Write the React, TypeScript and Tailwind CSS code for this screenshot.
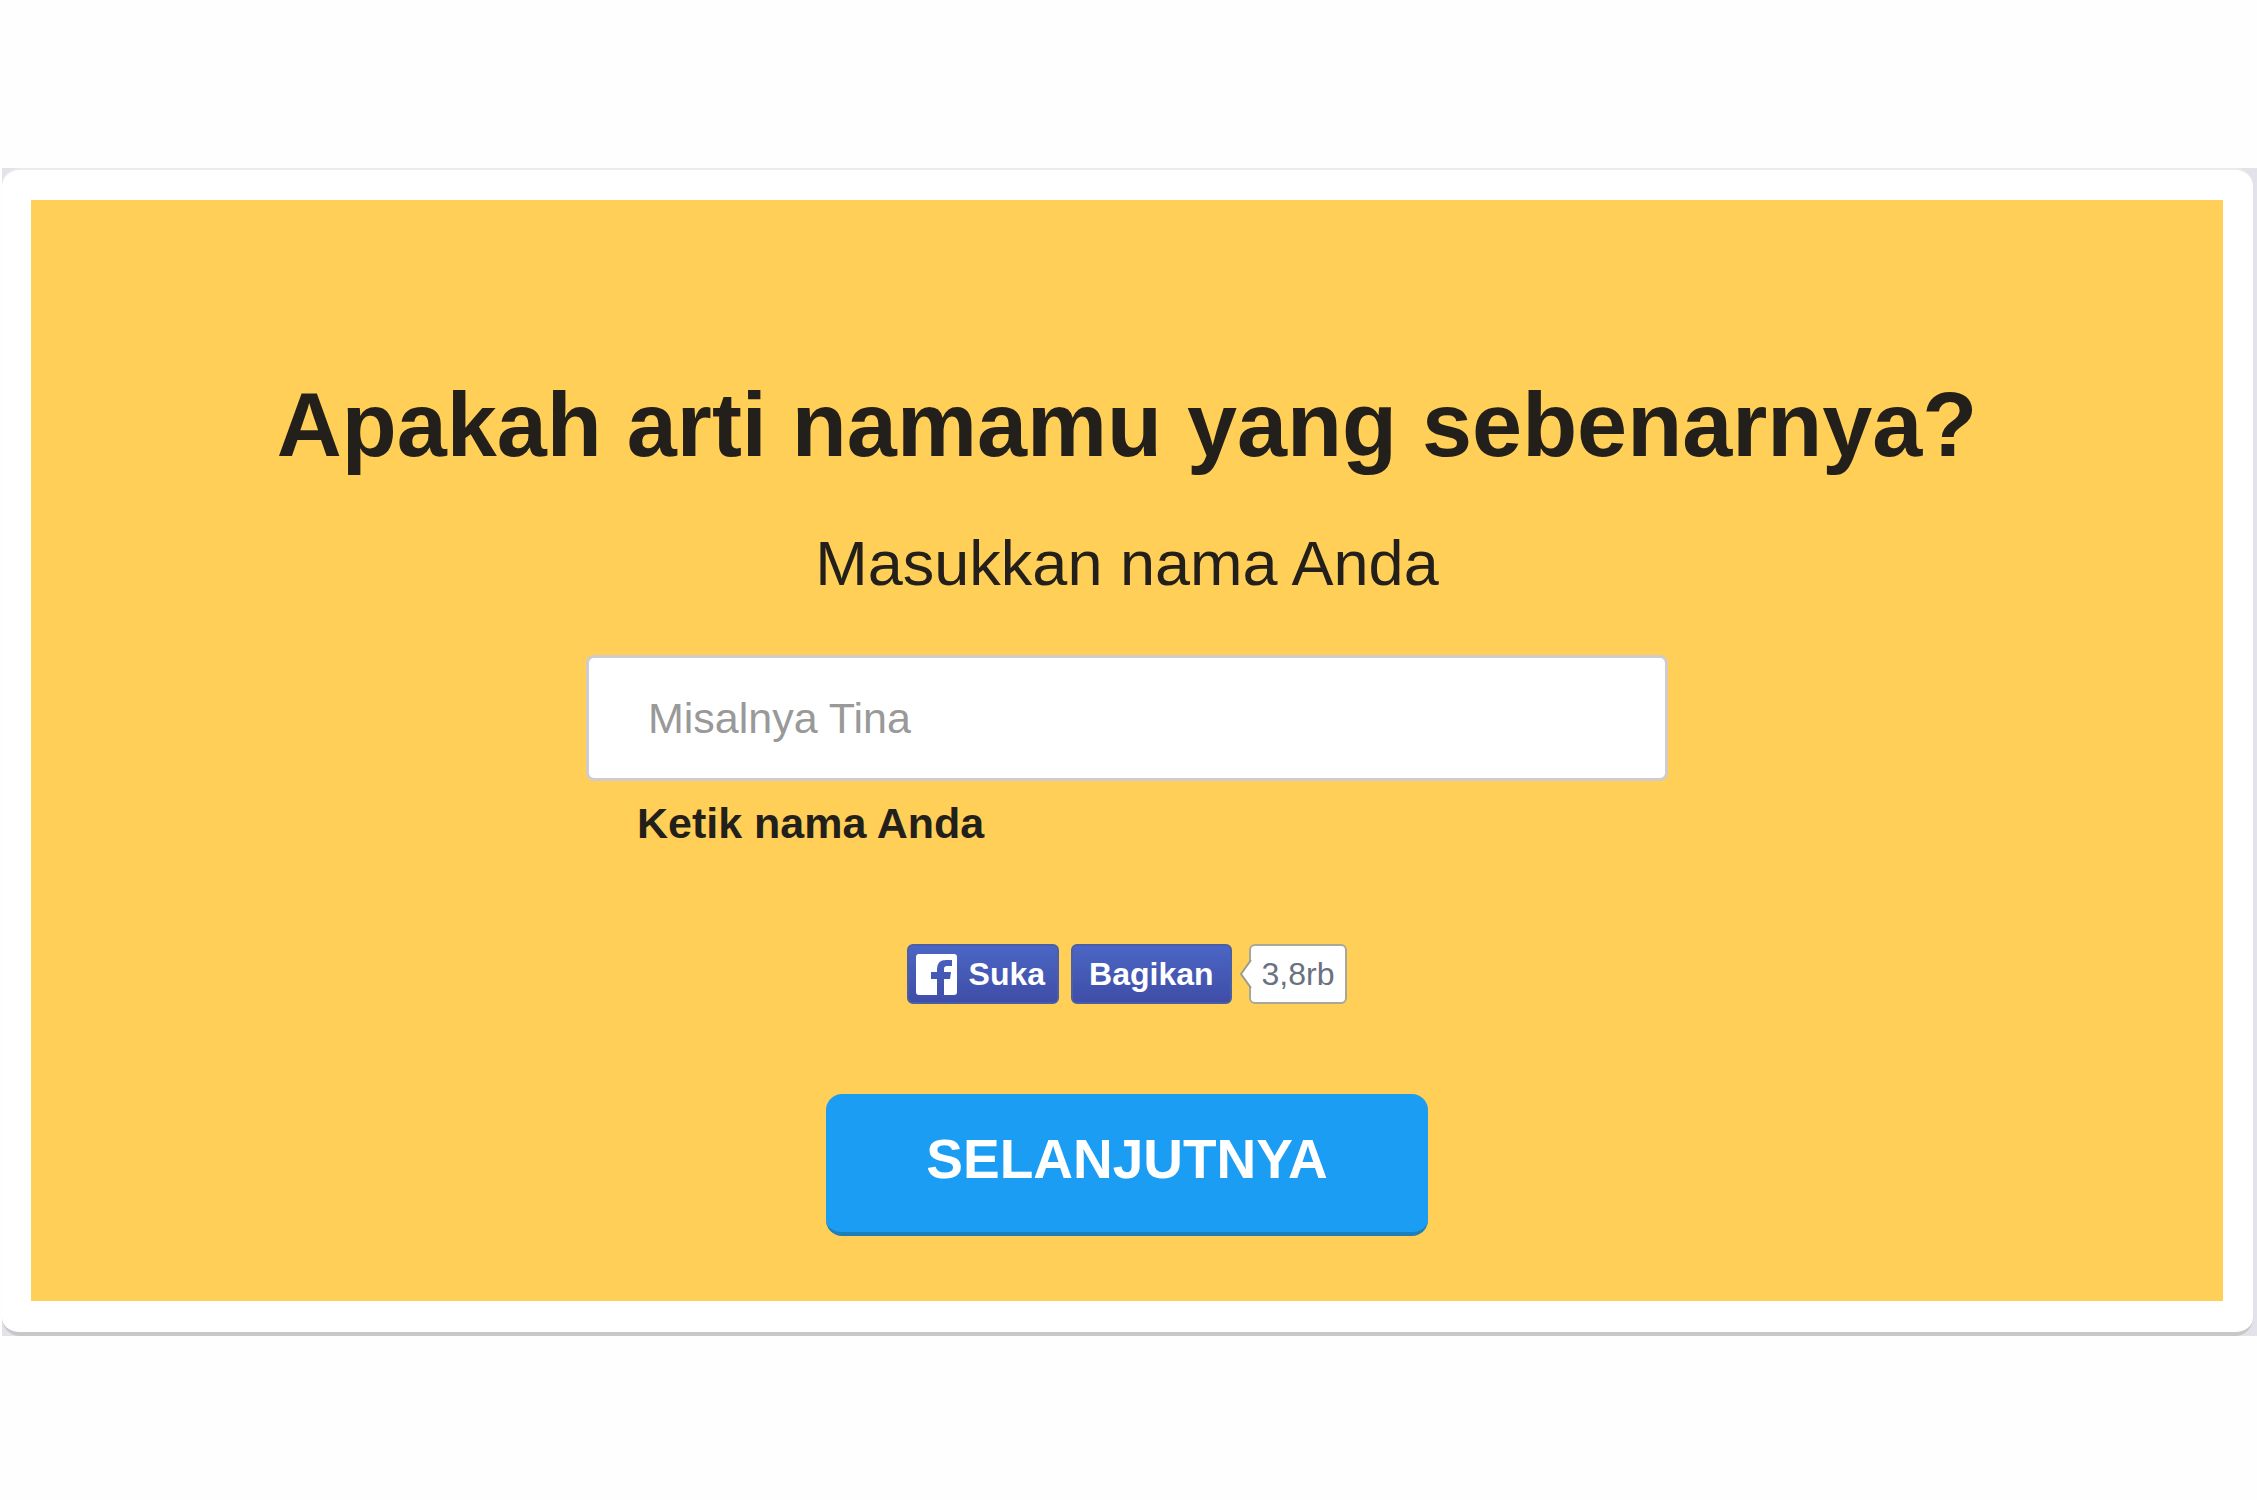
import React, { useState } from 'react';

const FacebookIcon: React.FC = () => (
  <svg viewBox="0 0 41 41" className="size-[41px] shrink-0" aria-hidden="true">
    <path
      fill="#fff"
      d="M3 0H38Q41 0 41 3V38Q41 41 38 41H28V25H34L35 18H28V15Q28 12 31 12H36V6H30Q21 6 21 15V18H15V25H21V41H3Q0 41 0 38V3Q0 0 3 0Z"
    />
  </svg>
);

interface ShareButtonProps {
  label: string;
  icon?: React.ReactNode;
}

const ShareButton: React.FC<ShareButtonProps> = ({ label, icon }) => (
  <button
    type="button"
    className={`flex h-[60px] items-center gap-3 rounded-md border-2 border-[#4a5fa5] bg-linear-to-b from-[#4b66c4] to-[#3f4da8] text-[32px] leading-10 font-bold text-white ${
      icon ? 'pr-3 pl-[7px]' : 'px-4'
    }`}
  >
    {icon}
    {label}
  </button>
);

const ShareCount: React.FC<{ count: string }> = ({ count }) => (
  <div className="flex items-center">
    <svg viewBox="0 0 12 30" className="relative z-10 -mr-[3px] h-[30px] w-3" aria-hidden="true">
      <path d="M12 1L1 15L12 29Z" fill="#fff" />
      <path d="M11 1L1 15L11 29" fill="none" stroke="#9a9a90" strokeWidth="2" />
    </svg>
    <span className="flex h-[60px] items-center rounded-md border-2 border-[#a9a898] bg-white px-[11px] text-[32px] leading-10 text-[#6a7180]">
      {count}
    </span>
  </div>
);

const App: React.FC = () => {
  const [name, setName] = useState('');

  return (
    <main className="min-h-screen bg-[#fefefe] pt-[168px] font-['Liberation_Sans',Arial,sans-serif] text-[#231f1a]">
      <div className="ml-0.5 bg-[#e3e2ea] pr-1">
        <section className="rounded-[18px] border-t-2 border-b-4 border-t-[#ebebeb] border-b-[#c8c8c8] bg-white pt-[30px] pr-[30px] pb-[31px] pl-[29px]">
          <form
            onSubmit={(e) => e.preventDefault()}
            className="flex flex-col items-center bg-[#ffcf57] px-8 pt-[175px] pb-[65px]"
          >
            <h1 className="text-center text-[90px] leading-[100px] font-bold">
              Apakah arti namamu yang sebenarnya?
            </h1>
            <p className="mt-[52px] text-center text-[63px] leading-[72px]">Masukkan nama Anda</p>

            <div className="mt-14 flex w-full max-w-[1082px] flex-col">
              <input
                id="name"
                type="text"
                value={name}
                onChange={(e) => setName(e.target.value)}
                placeholder="Misalnya Tina"
                className="h-[126px] w-full rounded-lg border-3 border-[#d0cccc] bg-white px-[59px] text-[43px] placeholder:text-[#999]"
              />
              <label htmlFor="name" className="mt-[18px] pl-[51px] text-[43px] leading-12 font-bold">
                Ketik nama Anda
              </label>
            </div>

            <div className="mt-[97px] flex items-center">
              <ShareButton label="Suka" icon={<FacebookIcon />} />
              <div className="mr-2 ml-3">
                <ShareButton label="Bagikan" />
              </div>
              <ShareCount count="3,8rb" />
            </div>

            <button
              type="submit"
              className="mt-[90px] rounded-2xl border-b-4 border-[#1f7fb8] bg-[#1b9df3] px-[100px] pt-[35px] pb-[43px] text-[55px] leading-[60px] font-bold text-white"
            >
              SELANJUTNYA
            </button>
          </form>
        </section>
      </div>
    </main>
  );
};

export default App;
